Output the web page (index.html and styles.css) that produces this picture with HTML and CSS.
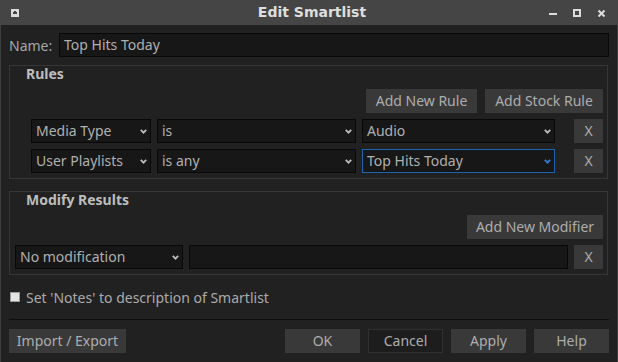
FILE: index.html
```html
<!DOCTYPE html>
<html lang="en">
<head>
    <meta charset="UTF-8">
    <meta name="viewport" content="width=device-width, initial-scale=1.0">
    <title>Edit Smartlist</title>
    <link rel="stylesheet" href="styles.css">
</head>
<body>
    <div class="titlebar">
        <div class="tb-left">
            <svg width="8" height="8" viewBox="0 0 8 8"><rect width="8" height="8" fill="#dcdcdc"/><rect x="3" y="2" width="2" height="2" fill="#444"/><rect x="2" y="3" width="4" height="2" fill="#444"/></svg>
        </div>
        <div class="tb-title">Edit Smartlist</div>
        <div class="tb-right">
            <svg width="56" height="8" viewBox="0 0 56 8">
                <rect x="0" y="4" width="8" height="2" fill="#dcdcdc"/>
                <rect x="25" y="1" width="6" height="6" fill="none" stroke="#dcdcdc" stroke-width="2"/>
                <path d="M49.5 1.5 L55.5 7.5 M55.5 1.5 L49.5 7.5" stroke="#dcdcdc" stroke-width="2"/>
            </svg>
        </div>
    </div>

    <div class="dialog">
        <div class="name-row">
            <span class="label">Name:</span>
            <div class="field grow">Top Hits Today</div>
        </div>

        <div class="group rules">
            <div class="group-title">Rules</div>
            <div class="group-actions">
                <button class="btn btn-rule">Add New Rule</button>
                <button class="btn btn-stock">Add Stock Rule</button>
            </div>
            <div class="row">
                <div class="combo w-field">Media Type <svg class="arrow" width="7" height="5" viewBox="0 0 7 5"><path d="M0.8 0.8 L3.5 3.6 L6.2 0.8" fill="none" stroke="#bdbdbd" stroke-width="1.8"/></svg></div>
                <div class="combo w-op">is <svg class="arrow" width="7" height="5" viewBox="0 0 7 5"><path d="M0.8 0.8 L3.5 3.6 L6.2 0.8" fill="none" stroke="#bdbdbd" stroke-width="1.8"/></svg></div>
                <div class="combo w-val">Audio <svg class="arrow" width="7" height="5" viewBox="0 0 7 5"><path d="M0.8 0.8 L3.5 3.6 L6.2 0.8" fill="none" stroke="#bdbdbd" stroke-width="1.8"/></svg></div>
                <button class="btn btn-x">X</button>
            </div>
            <div class="row">
                <div class="combo w-field">User Playlists <svg class="arrow" width="7" height="5" viewBox="0 0 7 5"><path d="M0.8 0.8 L3.5 3.6 L6.2 0.8" fill="none" stroke="#bdbdbd" stroke-width="1.8"/></svg></div>
                <div class="combo w-op">is any <svg class="arrow" width="7" height="5" viewBox="0 0 7 5"><path d="M0.8 0.8 L3.5 3.6 L6.2 0.8" fill="none" stroke="#bdbdbd" stroke-width="1.8"/></svg></div>
                <div class="combo w-val focused">Top Hits Today <svg class="arrow" width="7" height="5" viewBox="0 0 7 5"><path d="M0.8 0.8 L3.5 3.6 L6.2 0.8" fill="none" stroke="#2a7fd4" stroke-width="1.8"/></svg></div>
                <button class="btn btn-x">X</button>
            </div>
        </div>

        <div class="group modify">
            <div class="group-title">Modify Results</div>
            <div class="group-actions">
                <button class="btn btn-mod">Add New Modifier</button>
            </div>
            <div class="row">
                <div class="combo w-modcombo">No modification <svg class="arrow" width="7" height="5" viewBox="0 0 7 5"><path d="M0.8 0.8 L3.5 3.6 L6.2 0.8" fill="none" stroke="#bdbdbd" stroke-width="1.8"/></svg></div>
                <div class="field w-modfield"></div>
                <button class="btn btn-x">X</button>
            </div>
        </div>

        <label class="check-row">
            <span class="checkbox"></span>
            <span>Set 'Notes' to description of Smartlist</span>
        </label>

        <div class="separator"></div>

        <div class="footer">
            <button class="btn btn-import">Import / Export</button>
            <div class="footer-right">
                <button class="btn btn-foot">OK</button>
                <button class="btn btn-foot btn-default">Cancel</button>
                <button class="btn btn-foot">Apply</button>
                <button class="btn btn-foot">Help</button>
            </div>
        </div>
    </div>
</body>
</html>
```

FILE: styles.css
```css
body {
    margin: 0;
    width: 618px;
    height: 362px;
    overflow: hidden;
    background-color: #212121;
    font-family: 'Noto Sans', 'DejaVu Sans', sans-serif;
    font-size: 14px;
    color: #aaaaaa;
}
.titlebar {
    height: 25px;
    background-color: #454545;
    display: grid;
    grid-template-columns: 1fr auto 1fr;
    align-items: center;
}
.tb-left {
    padding-left: 11px;
    display: flex;
    padding-top: 1px;
}
.tb-title {
    font-family: 'DejaVu Sans', sans-serif;
    font-weight: bold;
    color: #dedede;
    padding-left: 6px;
    line-height: 25px;
}
.tb-right {
    display: flex;
    justify-content: flex-end;
    padding-right: 13px;
    padding-top: 1px;
}
.dialog {
    height: 336px;
    border: 1px solid #3e3e3e;
    border-top: none;
    padding: 8px 8px 0 8px;
}
.name-row {
    display: flex;
    gap: 8px;
    align-items: center;
    height: 24px;
}
.label {
    width: 42px;
    color: #a6a6a6;
}
.grow {
    flex: 1;
}
.field,
.combo {
    box-sizing: border-box;
    height: 24px;
    line-height: 22px;
    background-color: #171717;
    border: 1px solid #080808;
    padding-left: 4px;
    white-space: nowrap;
    color: #b0b0b0;
}
.combo {
    display: flex;
    align-items: center;
    justify-content: space-between;
    padding-right: 3px;
}
.combo .arrow {
    flex: none;
}
.combo.focused {
    border-color: #1c62ad;
}
.group {
    border: 1px solid #363636;
    margin-right: 1px;
}
.rules {
    margin-top: 8px;
    padding: 0 4px 5px 21px;
}
.modify {
    margin-top: 12px;
    padding: 0 4px 5px 5px;
}
.group-title {
    height: 16px;
    line-height: 16px;
    font-weight: bold;
    color: #bdbdbd;
    margin-bottom: 7px;
}
.rules .group-title {
    margin-left: -5px;
}
.modify .group-title {
    padding-left: 11px;
}
.group-actions {
    display: flex;
    justify-content: flex-end;
    gap: 8px;
    margin-bottom: 6px;
}
.row {
    display: flex;
    gap: 6px;
    margin-bottom: 6px;
}
.row:last-child {
    margin-bottom: 0;
}
.btn {
    box-sizing: border-box;
    height: 24px;
    padding: 0;
    border: none;
    background-color: #393939;
    color: #adadad;
    font-family: inherit;
    font-size: 14px;
    line-height: 24px;
    text-align: center;
}
.btn-rule { width: 111px; }
.btn-stock { width: 118px; }
.btn-mod { width: 136px; }
.btn-x {
    width: 29px;
    margin-left: 13px;
}
.w-field { width: 120px; }
.w-op { width: 199px; }
.w-val { width: 193px; }
.w-modcombo { width: 168px; }
.w-modfield { width: 379px; }
.modify .btn-x { margin-left: 0; }
.check-row {
    display: flex;
    align-items: center;
    height: 20px;
    margin-top: 12px;
    gap: 6px;
    padding-left: 1px;
}
.checkbox {
    box-sizing: border-box;
    width: 10px;
    height: 10px;
    background-color: #e4e4e4;
    border: 1px solid #9a9a9a;
}
.separator {
    height: 1px;
    background-color: #0e0e0e;
    margin-top: 12px;
}
.footer {
    display: flex;
    justify-content: space-between;
    margin-top: 9px;
}
.footer-right {
    display: flex;
    gap: 8px;
}
.btn-import { width: 117px; }
.btn-foot { width: 75px; }
.btn-default {
    background-color: #1d1d1d;
    border: 1px solid #303030;
    line-height: 22px;
}
```
